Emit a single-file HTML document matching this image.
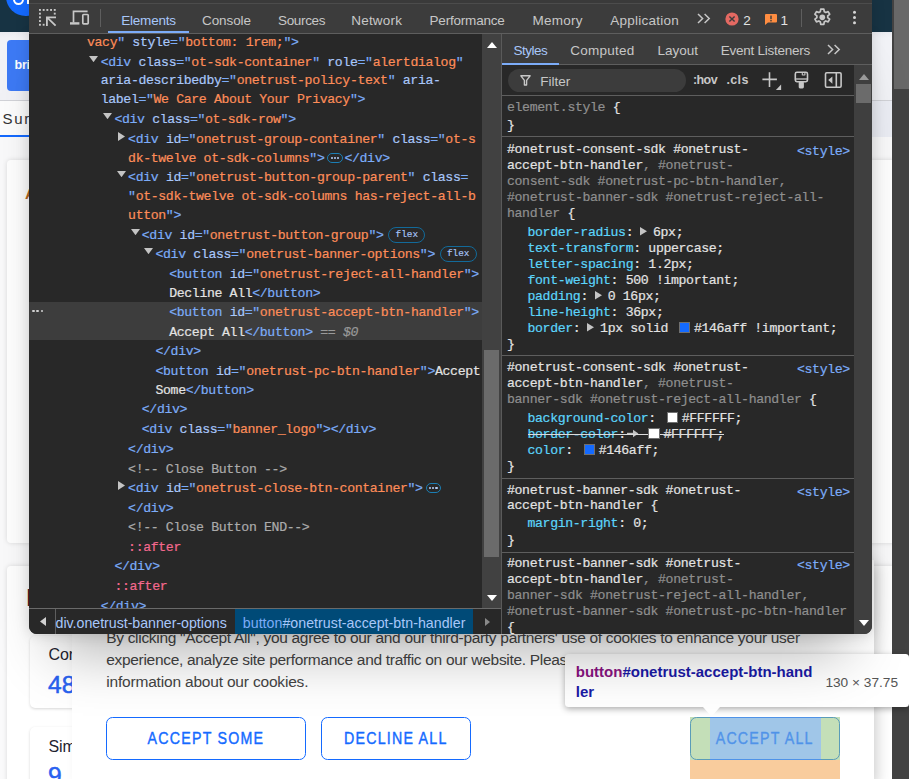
<!DOCTYPE html>
<html lang="en">
<head>
<meta charset="utf-8">
<title>DevTools - cookie banner</title>
<style>
*{box-sizing:border-box;margin:0;padding:0}
html,body{width:909px;height:779px;overflow:hidden}
body{position:relative;background:#fafafb;font-family:"Liberation Sans",sans-serif;color:#222}
.abs{position:absolute}
/* ---------- page behind ---------- */
#hdr{left:0;top:0;width:892px;height:31.5px;background:#173343}
#hdrsh{left:0;top:31.5px;width:892px;height:68.5px;background:linear-gradient(#eaebf0,#f2f3f7 6px)}
#vscroll{left:892px;top:0;width:17px;height:779px;background:#424242}
#vthumb{left:894px;top:0;width:15px;height:89px;background:#686868}

#logo{left:6.4px;top:-23.6px;width:39.2px;height:39.2px;border-radius:50%;background:#146aff}
#logoO{left:13px;top:-6.6px;width:11.2px;height:11.2px;border-radius:50%;border:2.8px solid #fff}#logoR{left:26.6px;top:-3px;width:3px;height:6.8px;background:#fff}
#bbtn{left:7px;top:40px;width:60px;height:51.2px;border-radius:4px;background:#3d7af5;color:#fff;font:bold 12.6px "Liberation Sans",sans-serif;letter-spacing:-.3px;line-height:16px;padding:17px 0 0 7.6px}
#hline{left:0;top:99.8px;width:892px;height:1px;background:#d2d3d8}
#tabbg{left:0;top:100.8px;width:892px;height:36.4px;background:#eceef5}#tabact{left:0;top:100.8px;width:120px;height:36px;background:#fdfdfd}
#sur{left:2.6px;top:110px;font-size:15px;letter-spacing:1.6px;color:#333;line-height:18px}
#uline{left:0;top:134.6px;width:60px;height:2.2px;background:#146aff}
.card{background:#fff;border-radius:4px;box-shadow:0 0 5px rgba(0,0,0,.13)}
.card2{background:#fff;border-radius:5px;box-shadow:0 1px 3px rgba(0,0,0,.16)}
#banner{left:72px;top:560px;width:802px;height:230px;background:#fff;box-shadow:6px 0 14px -4px rgba(0,0,0,.22)}
#btxt{left:34.2px;top:67px;font-size:15.5px;letter-spacing:-.305px;line-height:22px;color:#444;white-space:nowrap}
.btn{top:157.3px;height:42.4px;border:1.3px solid #146aff;border-radius:6.5px;color:#146aff;text-align:center;background:#fff;white-space:nowrap;font-size:16px;line-height:16px}
.btn span{position:absolute;left:0;right:0;top:12.7px;display:block;letter-spacing:1.37px;-webkit-text-stroke:.4px #146aff;transform:scaleX(.888);transform-origin:50% 50%}
#tip{left:565px;top:654px;width:344px;height:52.8px;background:#fff;border-radius:3.5px;box-shadow:0 2px 6px rgba(0,0,0,.32)}
#tipname{left:575.8px;top:662px;font-size:15px;font-weight:bold;line-height:20px;color:#1a1aa6;white-space:nowrap}
#tipsize{left:825.4px;top:673px;font-size:13.7px;line-height:19.5px;color:#555;white-space:nowrap}
/* ---------- devtools ---------- */
#dt{left:29px;top:0;width:843px;height:633.5px;background:#282828;border-radius:0 0 8px 8px;overflow:hidden;box-shadow:0 44px 56px -26px rgba(0,0,0,.3),0 0 14px rgba(0,0,0,.15);color:#e3e3e3}
#dt .abs{position:absolute}
#tb0{left:29px;top:0;width:843px;height:3.5px;background:#3a3a3a}
#tb0l{left:29px;top:3px;width:843px;height:1px;background:#4c4c4c}
#tb{left:29px;top:4px;width:843px;height:29px;background:#3c3c3c}
#tbl{left:29px;top:32.8px;width:843px;height:1px;background:#5e5e5e}
.tab{position:absolute;top:13px;font-size:13.5px;line-height:16px;color:#c7c7c7;white-space:nowrap}
.tab.on{color:#a8c7fa}
.stab{position:absolute;top:43px;font-size:13.5px;line-height:16px;color:#c7c7c7;white-space:nowrap}
.stab.on{color:#a8c7fa}
#elpane{left:29px;top:33.8px;width:453px;height:574.6px;overflow:hidden}
.ln{-webkit-text-stroke:.2px;position:absolute;white-space:pre;font-family:"Liberation Mono",monospace;font-size:13.2px;letter-spacing:-.362px;line-height:19.46px;height:19.46px;color:#e3e3e3}
.t{color:#7cacf8}.a{color:#a8c7fa}.v{color:#fe8d59}.x{color:#e3e3e3}.c{color:#ababab}.p{color:#f4688e}
.eq{color:#9a9a9a}.eq i{font-style:italic}
.ar{position:absolute;fill:#c4c4c4}
.badge{-webkit-text-stroke:.15px;letter-spacing:0;display:inline-block;vertical-align:middle;height:16px;line-height:13.6px;margin:-2px 0 0 4.6px;padding:0 6.4px;border:1.1px solid #126a9a;border-radius:8px;font-family:"Liberation Mono",monospace;font-size:9.4px;color:#a8c7fa}
.dots{display:inline-block;vertical-align:middle;width:15.8px;height:10.8px;margin:-1px 1.2px 0 3px;border:1.3px solid #1b7fb5;border-radius:5.5px;position:relative;background:#282828}
.dots i{position:absolute;top:3.1px;width:2.1px;height:2.1px;border-radius:50%;background:#b4cffa}
.dots i:nth-child(1){left:2.3px}.dots i:nth-child(2){left:5.55px}.dots i:nth-child(3){left:8.8px}
#selrow{left:0;top:268.3px;width:454px;height:37.6px;background:#3d3d3d}
#seldots{left:3.2px;top:276.2px}#seldots i{position:absolute;top:0;width:2.4px;height:2.4px;background:#d0d0d0;border-radius:1px}#seldots i:nth-child(1){left:0}#seldots i:nth-child(2){left:4.2px}#seldots i:nth-child(3){left:8.4px}
/* styles */
.sl{-webkit-text-stroke:.2px;position:absolute;white-space:pre;font-family:"Liberation Mono",monospace;font-size:13.2px;letter-spacing:-.362px;line-height:16px;height:16px;color:#e3e3e3}
.sel{color:#e3e3e3}.dim{color:#8f8f8f}.pn{color:#5cd5fb}.pv{color:#e3e3e3}
.lk{color:#7cacf8}
.sep{position:absolute;left:502px;width:352px;height:1px;background:#5e5e5e}
.trb{display:inline-block;width:12.2px;height:10px;vertical-align:middle;position:relative;margin-top:-2px}.tri{position:absolute;left:-.5px;top:.6px;fill:#c4c4c4}
.sw{position:relative;z-index:1;display:inline-block;vertical-align:middle;width:11.4px;height:11.4px;margin:-2.4px 3.7px 0 3.2px;border:1px solid #6f6f6f}
.strike{position:relative;display:inline-block}.strike:after{content:"";position:absolute;left:0;right:0;top:6.6px;height:1.2px;background:#dcdcdc}
.strike .pn{color:#5cd5fb}
.arr{display:inline-block;width:12px;height:10px;vertical-align:middle;position:relative;margin-top:-2px}.arr svg{position:absolute;left:1.4px;top:.5px}
</style>
</head>
<body>
<!-- page behind -->
<div class="abs" id="hdr"></div>
<div class="abs" id="hdrsh"></div>
<div class="abs" id="logo"></div>
<div class="abs" id="logoO"></div>
<div class="abs" id="logoR"></div>
<div class="abs" id="hline"></div>
<div class="abs" id="tabbg"></div>
<div class="abs" id="tabact"></div>
<div class="abs" id="bbtn">bri</div>
<div class="abs" id="sur">Sur</div>
<div class="abs" id="uline"></div>
<div class="abs card" style="left:7px;top:160.4px;width:900px;height:383px"></div>
<div class="abs card" style="left:7px;top:566px;width:900px;height:260px"></div>
<div class="abs" style="left:25px;top:184.5px;font-size:15px;font-weight:bold;line-height:18px;color:#b5651d">A</div>
<div class="abs" style="left:26.8px;top:589px;width:4px;height:16.6px;background:#7a1b1b;border-left:1px solid #e8d9a0"></div>
<div class="abs card2" style="left:30px;top:635.5px;width:300px;height:72px"></div>
<div class="abs card2" style="left:30px;top:726.5px;width:300px;height:72px"></div>
<div class="abs" style="left:48.4px;top:645px;font-size:16px;line-height:20px;color:#1f2430">Cor</div>
<div class="abs" style="left:48px;top:670px;font-size:24.5px;line-height:30px;color:#2962f0;-webkit-text-stroke:.5px #2962f0">48</div>
<div class="abs" style="left:48.4px;top:737px;font-size:16px;line-height:20px;color:#1f2430">Sim</div>
<div class="abs" style="left:48px;top:761px;font-size:24.5px;line-height:30px;color:#2962f0;-webkit-text-stroke:.5px #2962f0">9</div>

<!-- cookie banner -->
<div class="abs" id="banner">
  <p class="abs" id="btxt">By clicking "Accept All", you agree to our and our third-party partners' use of cookies to enhance your user<br>experience, analyze site performance and traffic on our website. Please see our cookie policy for more<br><span style="letter-spacing:-.185px">information about our cookies.</span></p>
  <div class="abs btn" style="left:34.2px;width:199.8px"><span>ACCEPT SOME</span></div>
  <div class="abs btn" style="left:249px;width:149.6px"><span>DECLINE ALL</span></div>
  <div class="abs btn" style="left:618.4px;width:149.4px"><span>ACCEPT ALL</span></div>
</div>
<!-- highlight overlay -->
<div class="abs" style="left:690.4px;top:717.3px;width:19.8px;height:42.4px;background:rgba(147,196,125,.55)"></div>
<div class="abs" style="left:821.2px;top:717.3px;width:18.6px;height:42.4px;background:rgba(147,196,125,.55)"></div>
<div class="abs" style="left:710.2px;top:717.3px;width:111px;height:42.4px;background:rgba(111,168,220,.66)"></div>
<div class="abs" style="left:690.4px;top:759.7px;width:149.4px;height:20px;background:rgba(246,178,107,.66)"></div>

<!-- browser scrollbar -->
<div class="abs" id="vscroll"></div>
<div class="abs" id="vthumb"></div>

<!-- tooltip -->
<div class="abs" id="tip"></div>
<div class="abs" id="tipname"><span style="color:#881280">button</span>#onetrust-accept-btn-hand<br>ler</div>
<div class="abs" id="tipsize">130 × 37.75</div>
<svg class="abs" style="left:702.5px;top:706.5px" width="17" height="10" viewBox="0 0 17 10"><path d="M0 0 L17 0 L8.5 9.5 Z" fill="#fff"/></svg>

<!-- devtools -->
<div class="abs" id="dt"><div class="abs" style="left:-29px;top:0;width:909px;height:640px">
  <div class="abs" id="tb"></div>
  <div class="abs" id="tb0"></div>
  <div class="abs" id="tb0l"></div>
  <div class="abs" id="tbl"></div>
  <div class="abs" style="left:99.8px;top:9px;width:1px;height:18px;background:#5e5e5e"></div>
  <div class="tab on" style="left:121.3px;letter-spacing:-.23px">Elements</div>
  <div class="abs" style="left:108px;top:30.7px;width:81px;height:2.6px;background:#7cacf8"></div>
  <div class="tab" style="left:202px;letter-spacing:-.09px">Console</div>
  <div class="tab" style="left:278px;letter-spacing:-.33px">Sources</div>
  <div class="tab" style="left:351.2px;letter-spacing:.22px">Network</div>
  <div class="tab" style="left:429.5px;letter-spacing:-.19px">Performance</div>
  <div class="tab" style="left:532.6px;letter-spacing:.22px">Memory</div>
  <div class="tab" style="left:610.3px;letter-spacing:.23px">Application</div>
  <div class="tab" style="left:743.3px;top:13px;color:#e3e3e3">2</div>
  <div class="tab" style="left:780.6px;top:13px;color:#e3e3e3">1</div>
  <div class="abs" style="left:800.8px;top:9px;width:1px;height:18px;background:#5e5e5e"></div>

  <!-- elements pane -->
  <div class="abs" id="elpane">
    <div class="abs" id="selrow"></div>
    <div class="abs" id="seldots"><i></i><i></i><i></i></div>
<div class="ln" style="left:58.0px;top:-0.80px"><span class="v">vacy</span><span class="t">"</span> <span class="a">style</span><span class="t">="</span><span class="v">bottom: 1rem;</span><span class="t">"&gt;</span></div>
<svg class="ar" style="left:60.4px;top:22.2px" width="9" height="6.2" viewBox="0 0 9 6.2"><path d="M0 0 L9 0 L4.5 6.2 Z"/></svg>
<div class="ln" style="left:71.7px;top:19.20px"><span class="t">&lt;div</span> <span class="a">class</span><span class="t">="</span><span class="v">ot-sdk-container</span><span class="t">"</span> <span class="a">role</span><span class="t">="</span><span class="v">alertdialog</span><span class="t">"</span></div>
<div class="ln" style="left:71.7px;top:37.20px"><span class="a">aria-describedby</span><span class="t">="</span><span class="v">onetrust-policy-text</span><span class="t">"</span> <span class="a">aria-</span></div>
<div class="ln" style="left:71.7px;top:56.20px"><span class="a">label</span><span class="t">="</span><span class="v">We Care About Your Privacy</span><span class="t">"&gt;</span></div>
<svg class="ar" style="left:74.1px;top:79.2px" width="9" height="6.2" viewBox="0 0 9 6.2"><path d="M0 0 L9 0 L4.5 6.2 Z"/></svg>
<div class="ln" style="left:85.4px;top:76.20px"><span class="t">&lt;div</span> <span class="a">class</span><span class="t">="</span><span class="v">ot-sdk-row</span><span class="t">"</span><span class="t">&gt;</span></div>
<svg class="ar" style="left:89.1px;top:98.4px" width="7" height="9" viewBox="0 0 7 9"><path d="M0 0 L7 4.5 L0 9 Z"/></svg>
<div class="ln" style="left:99.1px;top:96.20px"><span class="t">&lt;div</span> <span class="a">id</span><span class="t">="</span><span class="v">onetrust-group-container</span><span class="t">"</span> <span class="a">class</span><span class="t">="</span><span class="v">ot-s</span></div>
<div class="ln" style="left:99.1px;top:115.20px"><span class="v">dk-twelve ot-sdk-columns</span><span class="t">"&gt;</span><span class="dots"><i></i><i></i><i></i></span><span class="t">&lt;/div&gt;</span></div>
<svg class="ar" style="left:87.8px;top:137.2px" width="9" height="6.2" viewBox="0 0 9 6.2"><path d="M0 0 L9 0 L4.5 6.2 Z"/></svg>
<div class="ln" style="left:99.1px;top:134.20px"><span class="t">&lt;div</span> <span class="a">id</span><span class="t">="</span><span class="v">onetrust-button-group-parent</span><span class="t">"</span> <span class="a">class</span><span class="t">=</span></div>
<div class="ln" style="left:99.1px;top:153.20px"><span class="t">"</span><span class="v">ot-sdk-twelve ot-sdk-columns has-reject-all-b</span></div>
<div class="ln" style="left:99.1px;top:172.20px"><span class="v">utton</span><span class="t">"&gt;</span></div>
<svg class="ar" style="left:101.5px;top:195.2px" width="9" height="6.2" viewBox="0 0 9 6.2"><path d="M0 0 L9 0 L4.5 6.2 Z"/></svg>
<div class="ln" style="left:112.8px;top:192.20px"><span class="t">&lt;div</span> <span class="a">id</span><span class="t">="</span><span class="v">onetrust-button-group</span><span class="t">"</span><span class="t">&gt;</span><span class="badge">flex</span></div>
<svg class="ar" style="left:115.2px;top:214.2px" width="9" height="6.2" viewBox="0 0 9 6.2"><path d="M0 0 L9 0 L4.5 6.2 Z"/></svg>
<div class="ln" style="left:126.5px;top:211.20px"><span class="t">&lt;div</span> <span class="a">class</span><span class="t">="</span><span class="v">onetrust-banner-options</span><span class="t">"</span><span class="t">&gt;</span><span class="badge">flex</span></div>
<div class="ln" style="left:140.2px;top:231.20px"><span class="t">&lt;button</span> <span class="a">id</span><span class="t">="</span><span class="v">onetrust-reject-all-handler</span><span class="t">"</span><span class="t">&gt;</span></div>
<div class="ln" style="left:140.2px;top:250.20px"><span class="x">Decline All</span><span class="t">&lt;/button&gt;</span></div>
<div class="ln" style="left:140.2px;top:269.20px"><span class="t">&lt;button</span> <span class="a">id</span><span class="t">="</span><span class="v">onetrust-accept-btn-handler</span><span class="t">"</span><span class="t">&gt;</span></div>
<div class="ln" style="left:140.2px;top:289.20px"><span class="x">Accept All</span><span class="t">&lt;/button&gt;</span><span class="eq"> == <i>$0</i></span></div>
<div class="ln" style="left:126.5px;top:308.20px"><span class="t">&lt;/div&gt;</span></div>
<div class="ln" style="left:126.5px;top:328.20px"><span class="t">&lt;button</span> <span class="a">id</span><span class="t">="</span><span class="v">onetrust-pc-btn-handler</span><span class="t">"</span><span class="t">&gt;</span><span class="x">Accept</span></div>
<div class="ln" style="left:126.5px;top:347.20px"><span class="x">Some</span><span class="t">&lt;/button&gt;</span></div>
<div class="ln" style="left:112.8px;top:366.20px"><span class="t">&lt;/div&gt;</span></div>
<div class="ln" style="left:112.8px;top:386.20px"><span class="t">&lt;div</span> <span class="a">class</span><span class="t">="</span><span class="v">banner_logo</span><span class="t">"</span><span class="t">&gt;</span><span class="t">&lt;/div&gt;</span></div>
<div class="ln" style="left:99.1px;top:406.20px"><span class="t">&lt;/div&gt;</span></div>
<div class="ln" style="left:99.1px;top:426.20px"><span class="c">&lt;!-- Close Button --&gt;</span></div>
<svg class="ar" style="left:89.1px;top:447.4px" width="7" height="9" viewBox="0 0 7 9"><path d="M0 0 L7 4.5 L0 9 Z"/></svg>
<div class="ln" style="left:99.1px;top:445.20px"><span class="t">&lt;div</span> <span class="a">id</span><span class="t">="</span><span class="v">onetrust-close-btn-container</span><span class="t">"</span><span class="t">&gt;</span><span class="dots"><i></i><i></i><i></i></span></div>
<div class="ln" style="left:99.1px;top:465.20px"><span class="t">&lt;/div&gt;</span></div>
<div class="ln" style="left:99.1px;top:484.20px"><span class="c">&lt;!-- Close Button END--&gt;</span></div>
<div class="ln" style="left:99.1px;top:504.20px"><span class="p">::after</span></div>
<div class="ln" style="left:85.4px;top:523.20px"><span class="t">&lt;/div&gt;</span></div>
<div class="ln" style="left:85.4px;top:543.20px"><span class="p">::after</span></div>
<div class="ln" style="left:71.7px;top:563.20px"><span class="t">&lt;/div&gt;</span></div>
  </div>
  <!-- elements scrollbar -->
  <div class="abs" style="left:482px;top:33.8px;width:19px;height:575px;background:#414141"></div>
  <div class="abs" style="left:484px;top:350px;width:15px;height:207px;background:#6b6b6b"></div>
  <svg class="abs" style="left:486.5px;top:41.5px" width="10" height="6" viewBox="0 0 10 6"><path d="M0 6 L5 0 L10 6 Z" fill="#fff"/></svg>
  <svg class="abs" style="left:486.5px;top:594.5px" width="10" height="6" viewBox="0 0 10 6"><path d="M0 0 L5 6 L10 0 Z" fill="#fff"/></svg>
  <!-- splitter -->
  <div class="abs" style="left:500.8px;top:33.8px;width:1.2px;height:600px;background:#5a5a5a"></div>

  <!-- styles pane -->
  <div class="abs" style="left:502px;top:33.8px;width:370px;height:31px;background:#3c3c3c"></div>
  <div class="abs" style="left:502px;top:64.3px;width:370px;height:1px;background:#5e5e5e"></div>
  <div class="stab on" style="left:513.6px;letter-spacing:-.53px">Styles</div>
  <div class="abs" style="left:502px;top:62.8px;width:56.6px;height:2.6px;background:#7cacf8"></div>
  <div class="stab" style="left:570.2px;letter-spacing:.24px">Computed</div>
  <div class="stab" style="left:657.4px">Layout</div>
  <div class="stab" style="left:720.8px;letter-spacing:-.26px">Event Listeners</div>
  <div class="abs" style="left:508px;top:68.5px;width:178px;height:23.5px;border-radius:12px;background:#3c3c3c"></div>
  <div class="abs" style="left:540.2px;top:74px;font-size:13.5px;line-height:16px;color:#c7c7c7">Filter</div>
  <div class="abs" style="left:693px;top:72px;font-size:12.5px;font-weight:bold;letter-spacing:-.6px;line-height:16px;color:#c7c7c7">:hov</div>
  <div class="abs" style="left:726.5px;top:72px;font-size:12.5px;font-weight:bold;letter-spacing:.35px;line-height:16px;color:#c7c7c7">.cls</div>
  <div class="abs" style="left:502px;top:95.2px;width:352px;height:1px;background:#5e5e5e"></div>
<div class="sl " style="left:507.0px;top:100.00px"><span class="dim">element.style</span> {</div>
<div class="sl " style="left:507.0px;top:118.00px">}</div>
<div class="sep" style="top:136.2px"></div>
<div class="sl " style="left:507.0px;top:142.00px"><span class="sel">#onetrust-consent-sdk #onetrust-</span></div>
<div class="sl lk" style="left:797px;top:144.00px">&lt;style&gt;</div>
<div class="sl " style="left:507.0px;top:158.00px"><span class="sel">accept-btn-handler</span><span class="dim">, #onetrust-</span></div>
<div class="sl " style="left:507.0px;top:174.00px"><span class="dim">consent-sdk #onetrust-pc-btn-handler,</span></div>
<div class="sl " style="left:507.0px;top:190.00px"><span class="dim">#onetrust-banner-sdk #onetrust-reject-all-</span></div>
<div class="sl " style="left:507.0px;top:206.00px"><span class="dim">handler</span> {</div>
<div class="sl " style="left:527.5px;top:225.00px"><span class="pn">border-radius</span>: <span class="trb"><svg class="tri" width="7" height="8.6" viewBox="0 0 7 8.6"><path d="M0 0 L7 4.3 L0 8.6 Z"/></svg></span>6px;</div>
<div class="sl " style="left:527.5px;top:241.00px"><span class="pn">text-transform</span>: uppercase;</div>
<div class="sl " style="left:527.5px;top:257.00px"><span class="pn">letter-spacing</span>: 1.2px;</div>
<div class="sl " style="left:527.5px;top:273.00px"><span class="pn">font-weight</span>: 500 !important;</div>
<div class="sl " style="left:527.5px;top:289.00px"><span class="pn">padding</span>: <span class="trb"><svg class="tri" width="7" height="8.6" viewBox="0 0 7 8.6"><path d="M0 0 L7 4.3 L0 8.6 Z"/></svg></span>0 16px;</div>
<div class="sl " style="left:527.5px;top:305.00px"><span class="pn">line-height</span>: 36px;</div>
<div class="sl " style="left:527.5px;top:321.00px"><span class="pn">border</span>: <span class="trb"><svg class="tri" width="7" height="8.6" viewBox="0 0 7 8.6"><path d="M0 0 L7 4.3 L0 8.6 Z"/></svg></span>1px solid <span class="sw" style="background:#146aff"></span>#146aff !important;</div>
<div class="sl " style="left:507.0px;top:337.00px">}</div>
<div class="sep" style="top:354.8px"></div>
<div class="sl " style="left:507.0px;top:360.00px"><span class="sel">#onetrust-consent-sdk #onetrust-</span></div>
<div class="sl lk" style="left:797px;top:362.00px">&lt;style&gt;</div>
<div class="sl " style="left:507.0px;top:376.00px"><span class="sel">accept-btn-handler</span><span class="dim">, #onetrust-</span></div>
<div class="sl " style="left:507.0px;top:392.00px"><span class="dim">banner-sdk #onetrust-reject-all-handler</span> {</div>
<div class="sl " style="left:527.5px;top:411.00px"><span class="pn">background-color</span>: <span class="sw" style="background:#ffffff"></span>#FFFFFF;</div>
<div class="sl " style="left:527.5px;top:427.00px"><span class="strike"><span class="pn">border-color</span>:<span class="arr"><svg width="12" height="9" viewBox="0 0 12 9"><path d="M0 4.5 H7" fill="none" stroke="#c4c4c4" stroke-width="1.4"/><path d="M6 0.8 L11.4 4.5 L6 8.2 Z" fill="#c4c4c4"/></svg></span> <span class="sw" style="background:#ffffff"></span>#FFFFFF;</span></div>
<div class="sl " style="left:527.5px;top:443.00px"><span class="pn">color</span>: <span class="sw" style="background:#146aff"></span>#146aff;</div>
<div class="sl " style="left:507.0px;top:459.00px">}</div>
<div class="sep" style="top:477.8px"></div>
<div class="sl " style="left:507.0px;top:483.00px"><span class="sel">#onetrust-banner-sdk #onetrust-</span></div>
<div class="sl lk" style="left:797px;top:485.00px">&lt;style&gt;</div>
<div class="sl " style="left:507.0px;top:498.00px"><span class="sel">accept-btn-handler</span> {</div>
<div class="sl " style="left:527.5px;top:516.00px"><span class="pn">margin-right</span>: 0;</div>
<div class="sl " style="left:507.0px;top:533.00px">}</div>
<div class="sep" style="top:551.7px"></div>
<div class="sl " style="left:507.0px;top:556.00px"><span class="sel">#onetrust-banner-sdk #onetrust-</span></div>
<div class="sl lk" style="left:797px;top:558.00px">&lt;style&gt;</div>
<div class="sl " style="left:507.0px;top:572.00px"><span class="sel">accept-btn-handler</span><span class="dim">, #onetrust-</span></div>
<div class="sl " style="left:507.0px;top:588.00px"><span class="dim">banner-sdk #onetrust-reject-all-handler,</span></div>
<div class="sl " style="left:507.0px;top:604.00px"><span class="dim">#onetrust-banner-sdk #onetrust-pc-btn-handler</span></div>
<div class="sl " style="left:507.0px;top:620.00px">{</div>
  <!-- styles scrollbar -->
  <div class="abs" style="left:854px;top:65.3px;width:18px;height:570px;background:#3f3f3f"></div>
  <div class="abs" style="left:856px;top:84px;width:15px;height:19px;background:#6b6b6b"></div>
  <svg class="abs" style="left:858.5px;top:73.5px" width="10" height="6" viewBox="0 0 10 6"><path d="M0 6 L5 0 L10 6 Z" fill="#9a9a9a"/></svg>
  <svg class="abs" style="left:858.5px;top:620px" width="10" height="6" viewBox="0 0 10 6"><path d="M0 0 L5 6 L10 0 Z" fill="#fff"/></svg>

<!-- inspect icon -->
<svg class="abs" style="left:38px;top:8px" width="19" height="19" viewBox="0 0 19 19">
  <g fill="#c7c7c7">
    <rect x="1" y="1" width="1.9" height="1.9"/><rect x="4.7" y="1" width="1.9" height="1.9"/><rect x="8.4" y="1" width="1.9" height="1.9"/><rect x="12.1" y="1" width="1.9" height="1.9"/><rect x="15.8" y="1" width="1.9" height="1.9"/>
    <rect x="1" y="4.7" width="1.9" height="1.9"/><rect x="1" y="8.4" width="1.9" height="1.9"/><rect x="1" y="12.1" width="1.9" height="1.9"/><rect x="1" y="15.8" width="1.9" height="1.9"/>
    <rect x="4.7" y="15.8" width="1.9" height="1.9"/><rect x="15.8" y="4.7" width="1.9" height="1.9"/>
  </g>
  <path d="M18 9.3 H8.9 V18 M9.3 9.7 L17.6 17.6" fill="none" stroke="#c7c7c7" stroke-width="1.8"/>
</svg>
<!-- device icon -->
<svg class="abs" style="left:69px;top:9px" width="21" height="17" viewBox="0 0 21 17">
  <path d="M4.5 13.4 V2.4 H18.6" fill="none" stroke="#c7c7c7" stroke-width="1.7"/>
  <rect x="1" y="13.2" width="9.4" height="2.4" fill="#c7c7c7"/>
  <rect x="13.8" y="5.5" width="5.4" height="9.3" rx="0.8" fill="none" stroke="#c7c7c7" stroke-width="1.7"/>
</svg>
<!-- chevrons -->
<svg class="abs" style="left:697px;top:13px" width="14" height="11" viewBox="0 0 14 11"><path d="M1 1 L5.6 5.5 L1 10 M7.6 1 L12.2 5.5 L7.6 10" fill="none" stroke="#c7c7c7" stroke-width="1.5"/></svg>
<svg class="abs" style="left:826.5px;top:44px" width="14" height="11" viewBox="0 0 14 11"><path d="M1 1 L5.6 5.5 L1 10 M7.6 1 L12.2 5.5 L7.6 10" fill="none" stroke="#c7c7c7" stroke-width="1.5"/></svg>
<!-- error -->
<svg class="abs" style="left:725px;top:12.4px" width="14" height="14" viewBox="0 0 14 14"><circle cx="7" cy="7" r="6.6" fill="#e46962"/><path d="M4.4 4.4 L9.6 9.6 M9.6 4.4 L4.4 9.6" stroke="#3c3c3c" stroke-width="1.4" fill="none"/></svg>
<!-- warning -->
<svg class="abs" style="left:764.5px;top:14px" width="12" height="11" viewBox="0 0 12 11"><path d="M1 0 H11 a1 1 0 0 1 1 1 V7.6 a1 1 0 0 1 -1 1 H3 L0 11 V1 a1 1 0 0 1 1 -1 Z" fill="#ff8d41"/><rect x="5.3" y="1.6" width="1.4" height="3.6" fill="#3c3c3c"/><rect x="5.3" y="6" width="1.4" height="1.4" fill="#3c3c3c"/></svg>
<!-- gear -->
<svg class="abs" style="left:812.1px;top:7.2px" width="20.600" height="20.600" viewBox="0 0 24 24"><path fill="none" stroke="#c7c7c7" stroke-width="2" stroke-linejoin="round" d="M10.2 2.5h3.6l.5 2.9c.6.2 1.200.6 1.700 1l2.800-1 1.800 3.100-2.300 1.900c.1.600.1 1.300 0 1.900l2.300 1.900-1.800 3.100-2.800-1c-.5.400-1.100.8-1.700 1l-.5 2.900h-3.600l-.5-2.900c-.6-.2-1.200-.6-1.700-1l-2.800 1-1.800-3.100 2.300-1.900c-.1-.6-.1-1.300 0-1.900L3.400 8.500l1.800-3.100 2.800 1c.5-.4 1.100-.8 1.700-1z"/><circle cx="12" cy="12" r="3.300" fill="#c7c7c7"/></svg>
<!-- kebab -->
<svg class="abs" style="left:852px;top:9.5px" width="5" height="15" viewBox="0 0 5 15"><circle cx="2.5" cy="2.2" r="1.5" fill="#d5d5d5"/><circle cx="2.5" cy="7.5" r="1.5" fill="#d5d5d5"/><circle cx="2.5" cy="12.8" r="1.5" fill="#d5d5d5"/></svg>
<!-- funnel -->
<svg class="abs" style="left:520px;top:74.5px" width="11" height="11" viewBox="0 0 11 11"><path d="M0.9 0.8 H10.1 L6.6 5.4 V10 H4.4 V5.4 Z" fill="none" stroke="#c7c7c7" stroke-width="1.4" stroke-linejoin="round"/></svg>
<!-- plus -->
<svg class="abs" style="left:762px;top:72px" width="20" height="19" viewBox="0 0 20 19"><path d="M0.4 7.4 H14.9 M7.5 0.2 V14.9" stroke="#c7c7c7" stroke-width="1.6" fill="none"/><path d="M19.1 12.4 V18.1 H13.9 Z" fill="#c7c7c7"/></svg>
<!-- brush -->
<svg class="abs" style="left:794px;top:71px" width="15" height="18" viewBox="0 0 15 18"><rect x="1.300" y="1.300" width="12.200" height="9.400" rx="1.600" fill="none" stroke="#c7c7c7" stroke-width="1.600"/><path d="M1.300 8 H13.500" stroke="#c7c7c7" stroke-width="1.300"/><path d="M8.300 1.300 V4.300 M10.900 1.300 V4.300 M8.300 4 H10.900" stroke="#c7c7c7" stroke-width="1.100" fill="none"/><rect x="4.700" y="10.400" width="5.200" height="7" rx="1.300" fill="#c7c7c7"/></svg>
<!-- sidebar -->
<svg class="abs" style="left:823.7px;top:70.5px" width="19" height="18" viewBox="0 0 19 18"><rect x="1.500" y="1.800" width="15.600" height="14.400" rx="1.200" fill="none" stroke="#c7c7c7" stroke-width="1.600"/><path d="M12.300 1.800 V16.200" stroke="#c7c7c7" stroke-width="1.600"/><path d="M8.400 5.400 V12.800 L4.200 9.100 Z" fill="#c7c7c7"/></svg>

  <!-- breadcrumbs -->
  <div class="abs" style="left:29px;top:608.2px;width:472px;height:26px;background:#282828;border-top:1px solid #6a6a6a"></div>
  <div class="abs" style="left:235.2px;top:609.2px;width:238.2px;height:25px;background:#004a77"></div>
  <div class="abs" style="left:54.6px;top:609.2px;width:1px;height:25px;background:#5e5e5e"></div>
  <svg class="abs" style="left:39.5px;top:616.5px" width="6" height="9" viewBox="0 0 6 9"><path d="M6 0 L0 4.5 L6 9 Z" fill="#d0d0d0"/></svg>
  <svg class="abs" style="left:484.5px;top:617.5px" width="5" height="8" viewBox="0 0 5 8"><path d="M0 0 L5 4 L0 8 Z" fill="#8a8a8a"/></svg>
  <div class="abs" style="left:55.6px;top:615px;font-size:14.2px;letter-spacing:-.02px;line-height:17px;color:#a8c7fa;white-space:nowrap">div.onetrust-banner-options</div>
  <div class="abs" style="left:242.8px;top:615px;font-size:14.2px;letter-spacing:.03px;line-height:17px;color:#a8c7fa;white-space:nowrap"><span style="color:#7cacf8">button</span>#onetrust-accept-btn-handler</div>
  <div class="abs" style="left:474px;top:609.2px;width:27px;height:25px;background:#282828"></div>
  <svg class="abs" style="left:484.5px;top:617.5px" width="5" height="8" viewBox="0 0 5 8"><path d="M0 0 L5 4 L0 8 Z" fill="#8a8a8a"/></svg>
</div></div>

</body>
</html>
